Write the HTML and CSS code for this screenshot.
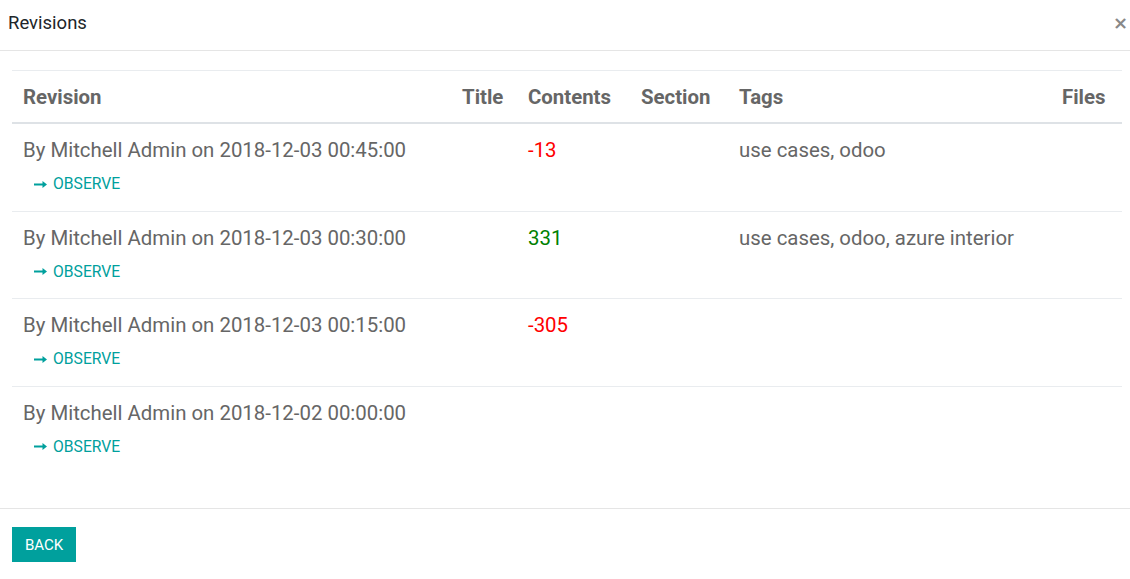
FILE: index.html
```html
<!DOCTYPE html>
<html lang="en">
<head>
    <meta charset="UTF-8">
    <meta name="viewport" content="width=device-width, initial-scale=1.0">
    <title>Revisions</title>
    <link rel="stylesheet" href="styles.css">
</head>
<body>
    <div class="modal">
        <header class="modal-header">
            <h4 class="modal-title">Revisions</h4>
            <button class="close" type="button">&times;</button>
        </header>

        <div class="modal-body">
            <table class="revisions">
                <colgroup>
                    <col class="col-revision">
                    <col class="col-title">
                    <col class="col-contents">
                    <col class="col-section">
                    <col class="col-tags">
                    <col class="col-files">
                </colgroup>
                <thead>
                    <tr>
                        <th>Revision</th>
                        <th>Title</th>
                        <th>Contents</th>
                        <th>Section</th>
                        <th>Tags</th>
                        <th>Files</th>
                    </tr>
                </thead>
                <tbody>
                    <tr>
                        <td>
                            By Mitchell Admin on 2018-12-03 00:45:00
                            <a class="observe" href="#"><svg width="13" height="7" viewBox="0 0 13 7"><path d="M0 2.5h8.5V0l4.5 3.5-4.5 3.5V4.5H0z" fill="currentColor"/></svg>OBSERVE</a>
                        </td>
                        <td></td>
                        <td class="minus">-13</td>
                        <td></td>
                        <td>use cases, odoo</td>
                        <td></td>
                    </tr>
                    <tr>
                        <td>
                            By Mitchell Admin on 2018-12-03 00:30:00
                            <a class="observe" href="#"><svg width="13" height="7" viewBox="0 0 13 7"><path d="M0 2.5h8.5V0l4.5 3.5-4.5 3.5V4.5H0z" fill="currentColor"/></svg>OBSERVE</a>
                        </td>
                        <td></td>
                        <td class="plus">331</td>
                        <td></td>
                        <td>use cases, odoo, azure interior</td>
                        <td></td>
                    </tr>
                    <tr>
                        <td>
                            By Mitchell Admin on 2018-12-03 00:15:00
                            <a class="observe" href="#"><svg width="13" height="7" viewBox="0 0 13 7"><path d="M0 2.5h8.5V0l4.5 3.5-4.5 3.5V4.5H0z" fill="currentColor"/></svg>OBSERVE</a>
                        </td>
                        <td></td>
                        <td class="minus">-305</td>
                        <td></td>
                        <td></td>
                        <td></td>
                    </tr>
                    <tr class="last">
                        <td>
                            By Mitchell Admin on 2018-12-02 00:00:00
                            <a class="observe" href="#"><svg width="13" height="7" viewBox="0 0 13 7"><path d="M0 2.5h8.5V0l4.5 3.5-4.5 3.5V4.5H0z" fill="currentColor"/></svg>OBSERVE</a>
                        </td>
                        <td></td>
                        <td></td>
                        <td></td>
                        <td></td>
                        <td></td>
                    </tr>
                </tbody>
            </table>
        </div>

        <footer class="modal-footer">
            <button class="btn-primary" type="button">BACK</button>
        </footer>
    </div>
</body>
</html>
```

FILE: styles.css
```css
body {
    margin: 0;
    font-family: Roboto, "Noto Sans", sans-serif;
    background-color: white;
    color: #666666;
}

.modal-header {
    display: flex;
    justify-content: space-between;
    align-items: center;
    height: 51px;
    padding: 0 2px 0 8px;
    border-bottom: 1px solid #e5e5e5;
    box-sizing: border-box;
}

.modal-title {
    margin: 0 0 4px;
    font-size: 18.5px;
    font-weight: normal;
    color: #212529;
}

.close {
    border: none;
    background: none;
    padding: 0;
    margin-bottom: 5px;
    font-family: "DejaVu Sans", sans-serif;
    font-size: 18px;
    font-weight: bold;
    color: #888888;
    cursor: pointer;
}

.modal-body {
    padding: 19px 8px 35px 12px;
}

.revisions {
    width: 100%;
    table-layout: fixed;
    border-collapse: collapse;
    font-size: 20.4px;
    line-height: 24px;
}

.col-revision { width: 439px; }
.col-title { width: 66px; }
.col-contents { width: 113px; }
.col-section { width: 98px; }
.col-tags { width: 323px; }

.revisions th {
    padding: 14px 11px 13px;
    text-align: left;
    font-weight: bold;
    color: #666666;
    border-top: 1px solid #e9ecef;
    border-bottom: 2px solid #dee2e6;
}

.revisions td {
    padding: 14px 11px 16.5px;
    vertical-align: top;
    border-bottom: 1px solid #e9ecef;
    white-space: nowrap;
}

.revisions tr.last td {
    border-bottom: none;
}

.observe {
    display: flex;
    align-items: center;
    gap: 6px;
    margin: 12px 0 0 11px;
    font-size: 15.7px;
    line-height: 20px;
    color: #00a09d;
    text-decoration: none;
}

.minus {
    color: #ff0000;
}

.plus {
    color: #008000;
}

.modal-footer {
    padding: 18px 12px;
    border-top: 1px solid #e5e5e5;
}

.btn-primary {
    height: 35px;
    padding: 0 12px;
    border: 1px solid #00a09d;
    background-color: #00a09d;
    color: white;
    font-family: Roboto, sans-serif;
    font-size: 15px;
    cursor: pointer;
}
```
